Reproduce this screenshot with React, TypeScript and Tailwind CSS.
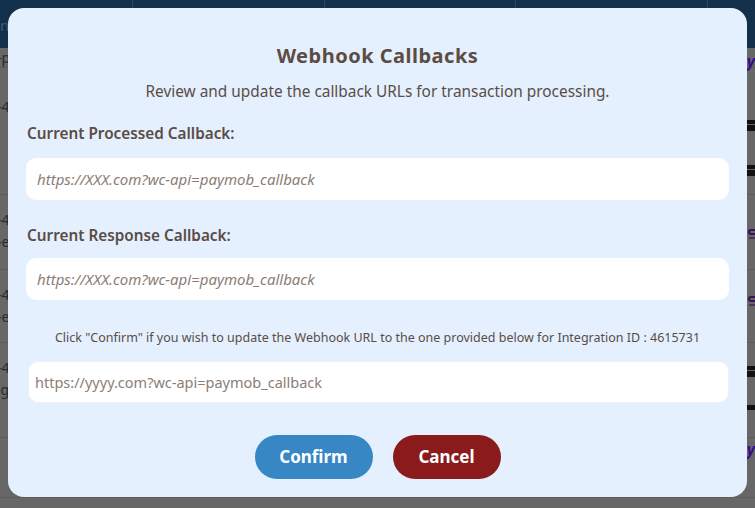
import React from "react";

const font = { fontFamily: '"Noto Sans", "Open Sans", sans-serif' };

function Bars() {
  return (
    <div className="flex flex-col gap-[1px]">
      <div className="h-[4px] w-[8px] bg-[#111]" />
      <div className="h-[6px] w-[8px] bg-[#111]" />
    </div>
  );
}

function Purple() {
  return (
    <div className="flex flex-col items-end gap-[2px]">
      <div className="h-[6px] w-[7px] rounded-l-full border-2 border-r-0 border-[#3a1057]" />
      <div className="h-[2px] w-[6px] bg-[#3a1057]/60" />
    </div>
  );
}

function Background() {
  return (
    <div className="flex h-full flex-col text-[14px] text-[#2a2a2a]">
      <div className="flex h-[48px] shrink-0 bg-[#13304a] text-[#3f5a70]">
        <div className="w-[133px] border-r border-[#284660] pt-[14px] text-[15px]">nt</div>
        <div className="w-[192px] border-r border-[#284660]" />
        <div className="w-[191px] border-r border-[#284660]" />
        <div className="w-[192px] border-r border-[#284660]" />
        <div className="flex-1" />
      </div>
      <div className="flex flex-1 flex-col bg-[#676767]">
        <div className="flex h-[20px] shrink-0 justify-between border-b border-[#5c5c5c]">
          <span className="-ml-[3px] leading-[20px]">-p</span>
          <span className="mt-[6px] text-[16px] font-bold italic leading-[14px] text-[#3b0c8a]">y</span>
        </div>
        <div className="flex h-[127px] shrink-0 justify-between border-b border-[#5c5c5c]">
          <span className="-ml-[3px] mt-[28px]">-4</span>
          <div className="mt-[52px] flex flex-col gap-[34px]">
            <Bars />
            <Bars />
          </div>
        </div>
        <div className="flex h-[75px] shrink-0 justify-between border-b border-[#5c5c5c]">
          <div className="-ml-[3px] mt-[14px] flex flex-col leading-[22px]">
            <span>-4</span>
            <span>-e</span>
          </div>
          <div className="mt-[34px]">
            <Purple />
          </div>
        </div>
        <div className="flex h-[73px] shrink-0 justify-between border-b border-[#5c5c5c]">
          <div className="-ml-[3px] mt-[14px] flex flex-col leading-[22px]">
            <span>-4</span>
            <span>-e</span>
          </div>
          <div className="mt-[26px]">
            <Purple />
          </div>
        </div>
        <div className="flex h-[95px] shrink-0 justify-between border-b border-[#5c5c5c]">
          <div className="-ml-[3px] mt-[14px] flex flex-col leading-[22px]">
            <span>-4</span>
            <span>ig</span>
          </div>
          <div className="mt-[23px] flex flex-col gap-[28px]">
            <Bars />
            <div className="h-[5px] w-[8px] bg-[#111]" />
          </div>
        </div>
        <div className="flex h-[60px] shrink-0 justify-end border-b border-[#5c5c5c]">
          <span className="mt-[4px] text-[16px] font-bold italic leading-[14px] text-[#3b0c8a]">y</span>
        </div>
      </div>
    </div>
  );
}

function Field({ placeholder }: { placeholder: string }) {
  return (
    <input
      readOnly
      placeholder={placeholder}
      style={font}
      className="h-[42px] w-full rounded-[10px] bg-white px-[11px] text-[15px] italic outline-none placeholder:text-[#8b7e76]"
    />
  );
}

export default function App() {
  return (
    <div style={font} className="relative h-[508px] w-[755px] overflow-hidden bg-[#676767]">
      <Background />
      <div className="absolute inset-0 flex justify-center pt-[8px]">
        <div className="flex h-[489px] w-[739px] flex-col rounded-[16px] bg-[#e4f0fe] px-[18px] text-[#5b4c45]">
          <h2 className="mt-[34px] text-center text-[20px] font-bold leading-[28px] tracking-[0.5px]">
            Webhook Callbacks
          </h2>
          <p className="mt-[10px] text-center text-[15.4px] leading-[24px]">
            Review and update the callback URLs for transaction processing.
          </p>
          <label className="mt-[17px] pl-[1px] text-[15.3px] font-semibold leading-[24px]">
            Current Processed Callback:
          </label>
          <div className="mt-[13px]">
            <Field placeholder="https://XXX.com?wc-api=paymob_callback" />
          </div>
          <label className="mt-[23px] pl-[1px] text-[15.3px] font-semibold leading-[24px]">
            Current Response Callback:
          </label>
          <div className="mt-[11px]">
            <Field placeholder="https://XXX.com?wc-api=paymob_callback" />
          </div>
          <p className="mt-[29px] text-center text-[12.5px] leading-[18px]">
            Click "Confirm" if you wish to update the Webhook URL to the one provided below for Integration ID : 4615731
          </p>
          <div className="mt-[14px] pl-[2px]">
            <input
              readOnly
              placeholder="https://yyyy.com?wc-api=paymob_callback"
              style={font}
              className="h-[42px] w-full rounded-[10px] border border-[#eef2f6] bg-white px-[6px] text-[14.5px] outline-none placeholder:text-[#8b7e76]"
            />
          </div>
          <div className="mt-[32px] flex justify-center gap-[20px]">
            <button className="h-[44px] w-[118px] rounded-full bg-[#3787c5] text-[17px] font-bold text-white">
              Confirm
            </button>
            <button className="h-[44px] w-[108px] rounded-full bg-[#8a1a1b] text-[17px] font-bold text-white">
              Cancel
            </button>
          </div>
        </div>
      </div>
    </div>
  );
}
